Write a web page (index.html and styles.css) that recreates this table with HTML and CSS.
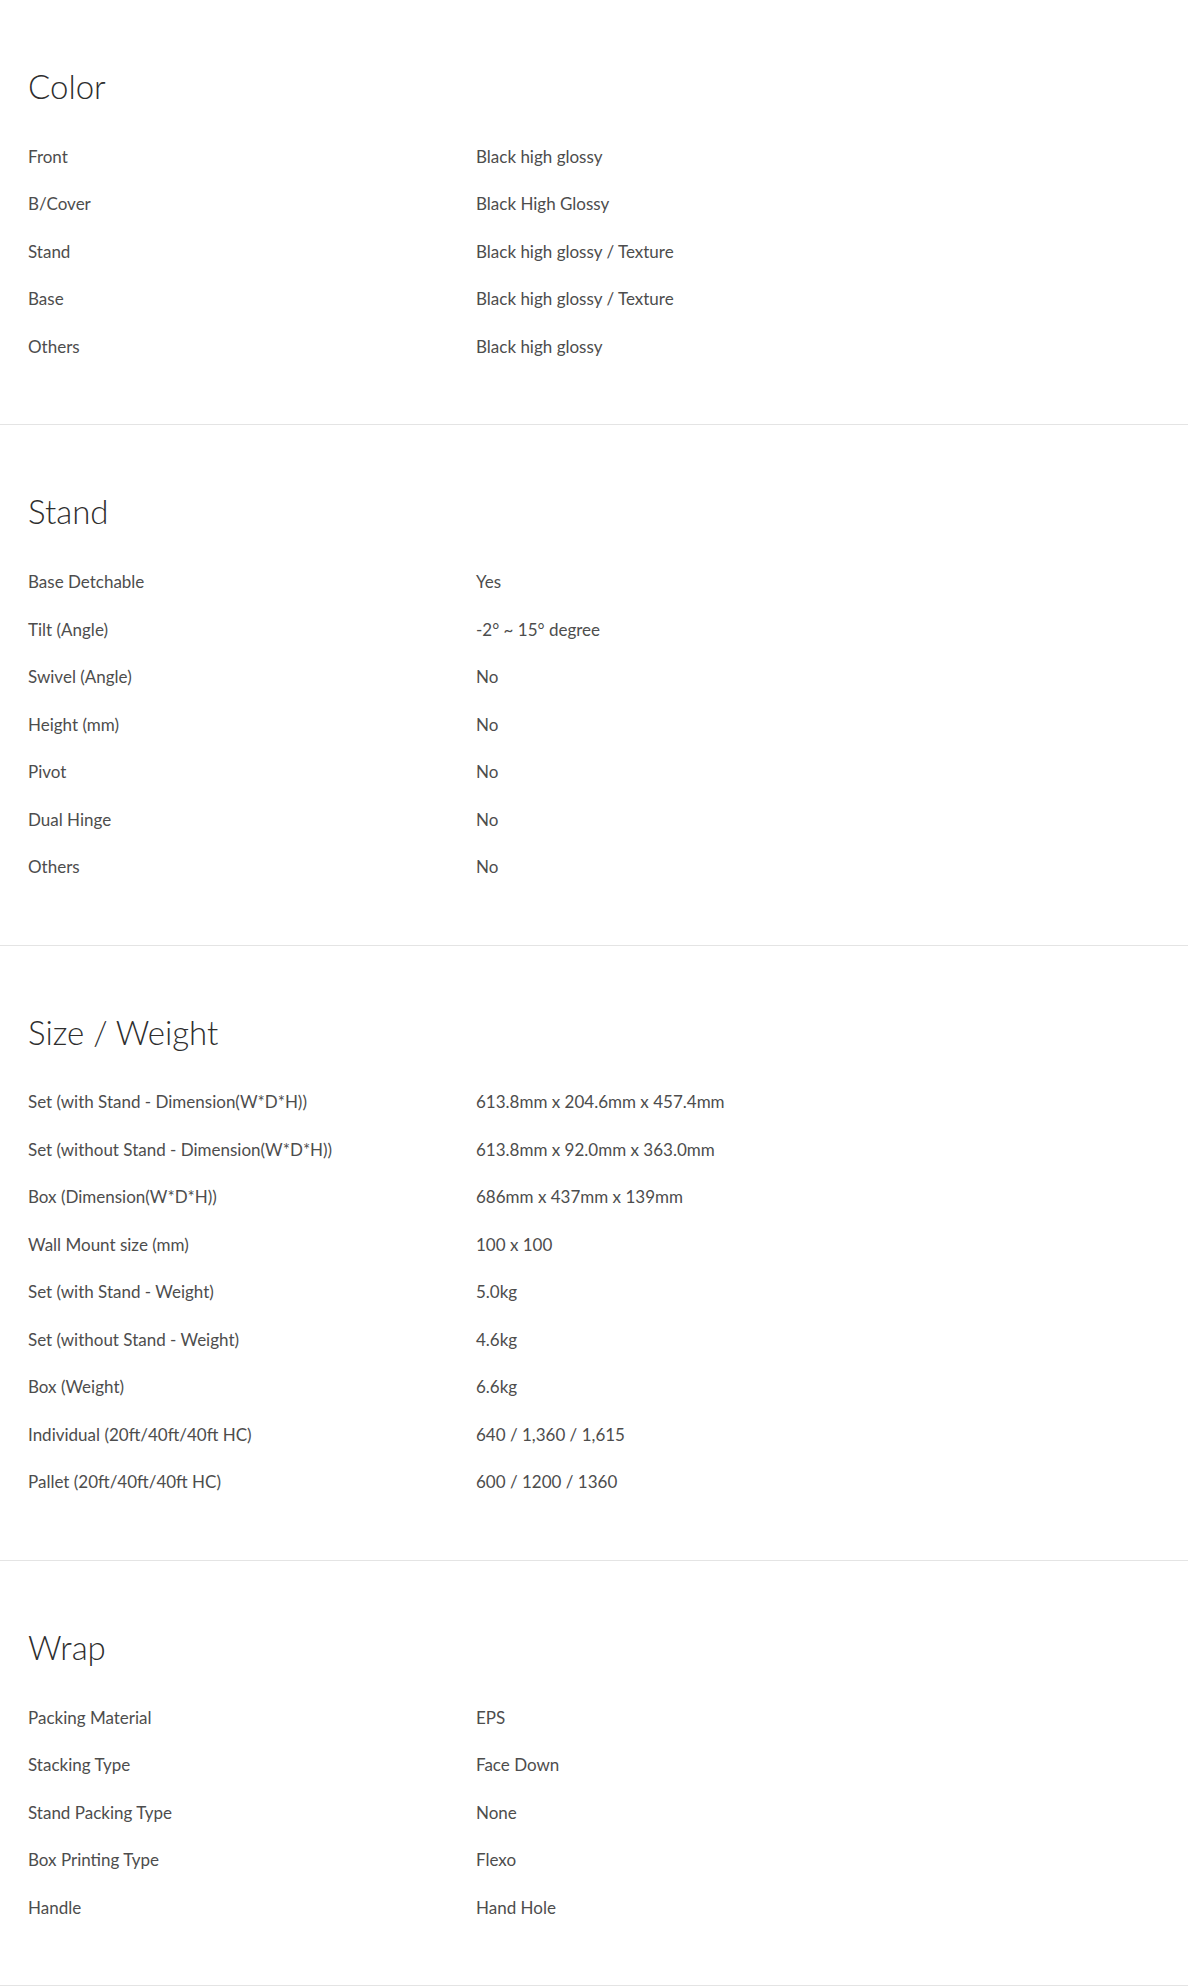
FILE: index.html
```html
<!DOCTYPE html>
<html lang="en">
<head>
<meta charset="utf-8">
<title>Specs</title>
<link rel="stylesheet" href="styles.css">
</head>
<body>
<main class="specs">
  <section class="spec-group">
    <h2 class="spec-title">Color</h2>
    <dl class="spec-list">
      <div class="spec-row"><dt>Front</dt><dd>Black high glossy</dd></div>
      <div class="spec-row"><dt>B/Cover</dt><dd>Black High Glossy</dd></div>
      <div class="spec-row"><dt>Stand</dt><dd>Black high glossy / Texture</dd></div>
      <div class="spec-row"><dt>Base</dt><dd>Black high glossy / Texture</dd></div>
      <div class="spec-row"><dt>Others</dt><dd>Black high glossy</dd></div>
    </dl>
  </section>
  <section class="spec-group">
    <h2 class="spec-title">Stand</h2>
    <dl class="spec-list">
      <div class="spec-row"><dt>Base Detchable</dt><dd>Yes</dd></div>
      <div class="spec-row"><dt>Tilt (Angle)</dt><dd>-2° ~ 15° degree</dd></div>
      <div class="spec-row"><dt>Swivel (Angle)</dt><dd>No</dd></div>
      <div class="spec-row"><dt>Height (mm)</dt><dd>No</dd></div>
      <div class="spec-row"><dt>Pivot</dt><dd>No</dd></div>
      <div class="spec-row"><dt>Dual Hinge</dt><dd>No</dd></div>
      <div class="spec-row"><dt>Others</dt><dd>No</dd></div>
    </dl>
  </section>
  <section class="spec-group">
    <h2 class="spec-title">Size / Weight</h2>
    <dl class="spec-list">
      <div class="spec-row"><dt>Set (with Stand - Dimension(W*D*H))</dt><dd>613.8mm x 204.6mm x 457.4mm</dd></div>
      <div class="spec-row"><dt>Set (without Stand - Dimension(W*D*H))</dt><dd>613.8mm x 92.0mm x 363.0mm</dd></div>
      <div class="spec-row"><dt>Box (Dimension(W*D*H))</dt><dd>686mm x 437mm x 139mm</dd></div>
      <div class="spec-row"><dt>Wall Mount size (mm)</dt><dd>100 x 100</dd></div>
      <div class="spec-row"><dt>Set (with Stand - Weight)</dt><dd>5.0kg</dd></div>
      <div class="spec-row"><dt>Set (without Stand - Weight)</dt><dd>4.6kg</dd></div>
      <div class="spec-row"><dt>Box (Weight)</dt><dd>6.6kg</dd></div>
      <div class="spec-row"><dt>Individual (20ft/40ft/40ft HC)</dt><dd>640 / 1,360 / 1,615</dd></div>
      <div class="spec-row"><dt>Pallet (20ft/40ft/40ft HC)</dt><dd>600 / 1200 / 1360</dd></div>
    </dl>
  </section>
  <section class="spec-group">
    <h2 class="spec-title">Wrap</h2>
    <dl class="spec-list">
      <div class="spec-row"><dt>Packing Material</dt><dd>EPS</dd></div>
      <div class="spec-row"><dt>Stacking Type</dt><dd>Face Down</dd></div>
      <div class="spec-row"><dt>Stand Packing Type</dt><dd>None</dd></div>
      <div class="spec-row"><dt>Box Printing Type</dt><dd>Flexo</dd></div>
      <div class="spec-row"><dt>Handle</dt><dd>Hand Hole</dd></div>
    </dl>
  </section>
</main>
</body>
</html>
```
FILE: styles.css
```css
* { box-sizing: border-box; }

body {
  margin: 0;
  background: #ffffff;
  color: #333333;
  font-family: Lato, "Open Sans", "Liberation Sans", sans-serif;
  font-weight: 300;
}

.specs {
  width: 1188px;
}

.spec-group {
  padding: 66px 28px 53.75px;
  border-bottom: 1px solid #e4e4e4;
}

.spec-title {
  margin: 0 0 27px;
  font-size: 33px;
  line-height: 40px;
  font-weight: 300;
  color: #2e2e2e;
}

.spec-list {
  margin: 0;
}

.spec-row {
  display: grid;
  grid-template-columns: 448px 1fr;
  height: 47.5px;
  align-items: center;
  font-size: 17px;
  line-height: 24px;
  font-weight: 400;
  color: #4d4d4d;
}

.spec-row dt,
.spec-row dd {
  margin: 0;
}
```
